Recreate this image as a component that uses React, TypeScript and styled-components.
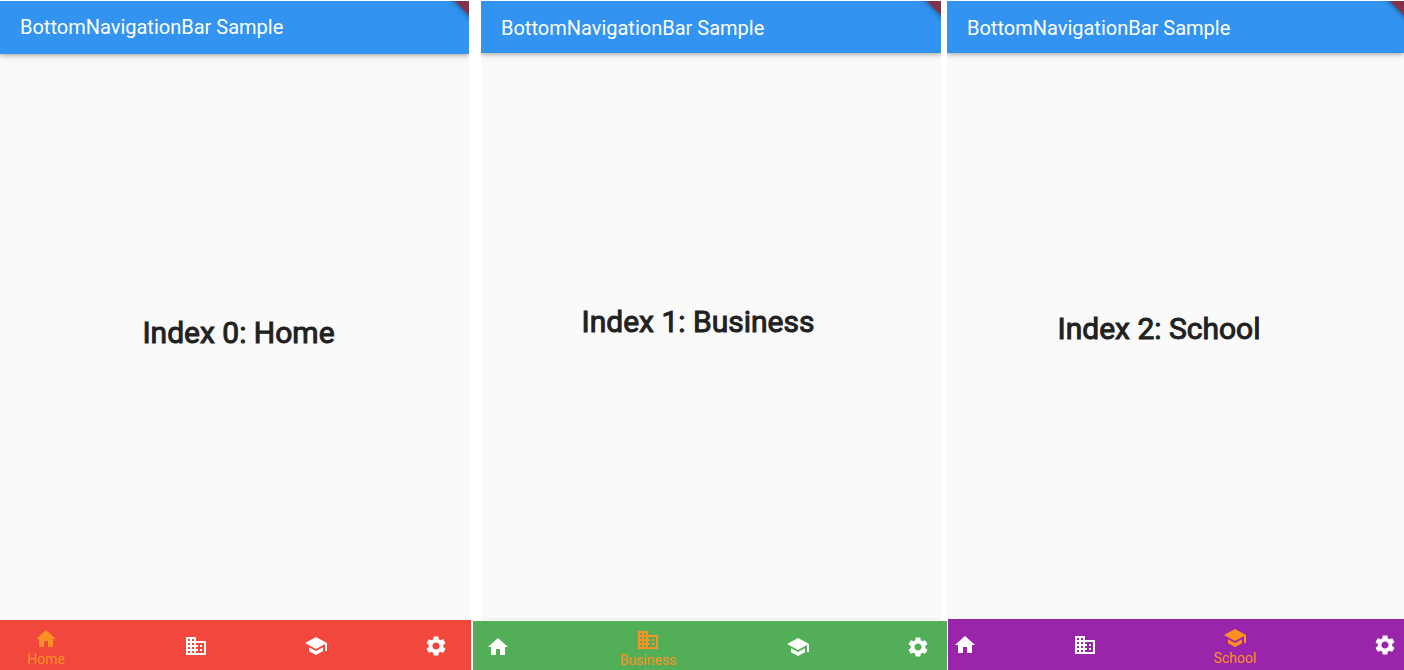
import React from 'react';
import styled, { createGlobalStyle } from 'styled-components';

const GlobalStyle = createGlobalStyle`
  * { box-sizing: border-box; }
  body {
    margin: 0;
    background: #ffffff;
    font-family: Roboto, "Liberation Sans", sans-serif;
  }
`;

const Gallery = styled.main`
  display: grid;
  grid-template-columns: 473fr 474fr 457fr;
  min-height: 100vh;
  padding-top: 1px;
  overflow: hidden;
`;

const Phone = styled.section`
  display: flex;
  flex-direction: column;
  min-width: 0;
`;

const Screen = styled.div<{ $inset: string; $edge: string }>`
  flex: 1;
  display: flex;
  flex-direction: column;
  margin: ${(p) => p.$inset};
  background: #fafafa;
  box-shadow: inset 0 -2px ${(p) => p.$edge};
  overflow: hidden;
`;

const AppBar = styled.header<{ $height: number; $pad: string }>`
  position: relative;
  display: flex;
  align-items: center;
  height: ${(p) => p.$height}px;
  padding: ${(p) => p.$pad};
  background: #3294f0;
  box-shadow: 0 1px 4px rgba(0, 0, 0, 0.28), 0 2px 8px rgba(0, 0, 0, 0.12);
`;

const Title = styled.h1`
  margin: 0;
  font-size: 20px;
  line-height: 24px;
  font-weight: 400;
  color: #ffffff;
  white-space: nowrap;
`;

const RibbonCorner = styled.div`
  position: absolute;
  top: 0;
  right: 0;
  width: 40px;
  height: 40px;
  overflow: hidden;

  &::before {
    content: "";
    position: absolute;
    top: -20px;
    right: -20px;
    width: 40px;
    height: 40px;
    background: #80334a;
    box-shadow: 0 0 6px rgba(0, 0, 0, 0.5);
    transform: translate(7px, -7px) rotate(45deg);
  }
`;

const Body = styled.div<{ $pad: string }>`
  flex: 1;
  display: flex;
  align-items: center;
  justify-content: center;
  padding: ${(p) => p.$pad};
`;

const Message = styled.p`
  margin: 0;
  font-size: 30px;
  line-height: 36px;
  font-weight: 400;
  -webkit-text-stroke: 1px #212121;
  color: #212121;
  white-space: nowrap;
`;

const NavBar = styled.nav<{ $color: string; $height: number; $pad: string; $margin: string }>`
  display: flex;
  justify-content: space-between;
  align-items: flex-start;
  height: ${(p) => p.$height}px;
  margin: ${(p) => p.$margin};
  padding: ${(p) => p.$pad};
  background: ${(p) => p.$color};
`;

const NavItem = styled.button<{ $active: boolean }>`
  display: flex;
  flex-direction: column;
  align-items: center;
  width: ${(p) => (p.$active ? 84 : 24)}px;
  margin: 0;
  padding: ${(p) => (p.$active ? 7 : 14)}px 0 0;
  border: 0;
  background: none;
  font-family: inherit;
  font-size: 14px;
  line-height: 16px;
  color: ${(p) => (p.$active ? '#fc9123' : '#ffffff')};
  cursor: pointer;
`;

const Icon = styled.svg`
  display: block;
  width: 24px;
  height: 24px;
  fill: currentColor;
`;

const items = [
  { label: 'Home', path: 'M10 20v-6h4v6h5v-8h3L12 3 2 12h3v8z' },
  {
    label: 'Business',
    path: 'M12 7V3H2v18h20V7H12zM6 19H4v-2h2v2zm0-4H4v-2h2v2zm0-4H4V9h2v2zm0-4H4V5h2v2zm4 12H8v-2h2v2zm0-4H8v-2h2v2zm0-4H8V9h2v2zm0-4H8V5h2v2zm10 12h-8v-2h2v-2h-2v-2h2v-2h-2V9h8v10zm-2-8h-2v2h2v-2zm0 4h-2v2h2v-2z',
  },
  { label: 'School', path: 'M5 13.18v4L12 21l7-3.82v-4L12 17l-7-3.82zM12 3L1 9l11 6 9-4.91V17h2V9L12 3z' },
  {
    label: 'Settings',
    path: 'M19.14 12.94c.04-.3.06-.61.06-.94 0-.32-.02-.64-.07-.94l2.03-1.58c.18-.14.23-.41.12-.61l-1.92-3.32c-.12-.22-.37-.29-.59-.22l-2.39.96c-.5-.38-1.03-.7-1.62-.94l-.36-2.54c-.04-.24-.24-.41-.48-.41h-3.84c-.24 0-.43.17-.47.41l-.36 2.54c-.59.24-1.13.57-1.62.94l-2.39-.96c-.22-.08-.47 0-.59.22L2.74 8.87c-.12.21-.08.47.12.61l2.03 1.58c-.05.3-.09.63-.09.94s.02.64.07.94l-2.03 1.58c-.18.14-.23.41-.12.61l1.92 3.32c.12.22.37.29.59.22l2.39-.96c.5.38 1.03.7 1.62.94l.36 2.54c.05.24.24.41.48.41h3.84c.24 0 .44-.17.47-.41l.36-2.54c.59-.24 1.13-.56 1.62-.94l2.39.96c.22.08.47 0 .59-.22l1.92-3.32c.12-.22.07-.47-.12-.61l-2.01-1.58zM12 15.6c-1.98 0-3.6-1.62-3.6-3.6s1.62-3.6 3.6-3.6 3.6 1.62 3.6 3.6-1.62 3.6-3.6 3.6z',
  },
];

const phones = [
  {
    active: 0, color: '#f2473c', barHeight: 53, barPad: '0 20px 2px', navHeight: 50,
    inset: '0 4px 0 0', edge: 'transparent', bodyPad: '0 0 8px 8px',
    navMargin: '0 2px 0 0', navPad: '0 23px 0 4px',
  },
  {
    active: 1, color: '#53af57', barHeight: 52, barPad: '2px 20px 0', navHeight: 49,
    inset: '0 6px 1px 8px', edge: '#f3f3f3', bodyPad: '0 26px 30px 0',
    navMargin: '0', navPad: '0 17px 0 13px',
  },
  {
    active: 2, color: '#9a25ab', barHeight: 52, barPad: '2px 20px 0', navHeight: 51,
    inset: '0', edge: 'transparent', bodyPad: '0 33px 14px 0',
    navMargin: '0 0 0 1px', navPad: '0 7px 0 5px',
  },
];

export default function App() {
  return (
    <>
      <GlobalStyle />
      <Gallery>
        {phones.map((phone) => (
          <Phone key={phone.active}>
            <Screen $inset={phone.inset} $edge={phone.edge}>
              <AppBar $height={phone.barHeight} $pad={phone.barPad}>
                <Title>BottomNavigationBar Sample</Title>
                <RibbonCorner />
              </AppBar>
              <Body $pad={phone.bodyPad}>
                <Message>{`Index ${phone.active}: ${items[phone.active].label}`}</Message>
              </Body>
            </Screen>
            <NavBar
              $color={phone.color}
              $height={phone.navHeight}
              $margin={phone.navMargin}
              $pad={phone.navPad}
            >
              {items.map((item, i) => {
                const active = i === phone.active;
                return (
                  <NavItem key={item.label} type="button" $active={active} aria-label={item.label}>
                    <Icon viewBox="0 0 24 24" aria-hidden="true">
                      <path d={item.path} />
                    </Icon>
                    {active && <span>{item.label}</span>}
                  </NavItem>
                );
              })}
            </NavBar>
          </Phone>
        ))}
      </Gallery>
    </>
  );
}
